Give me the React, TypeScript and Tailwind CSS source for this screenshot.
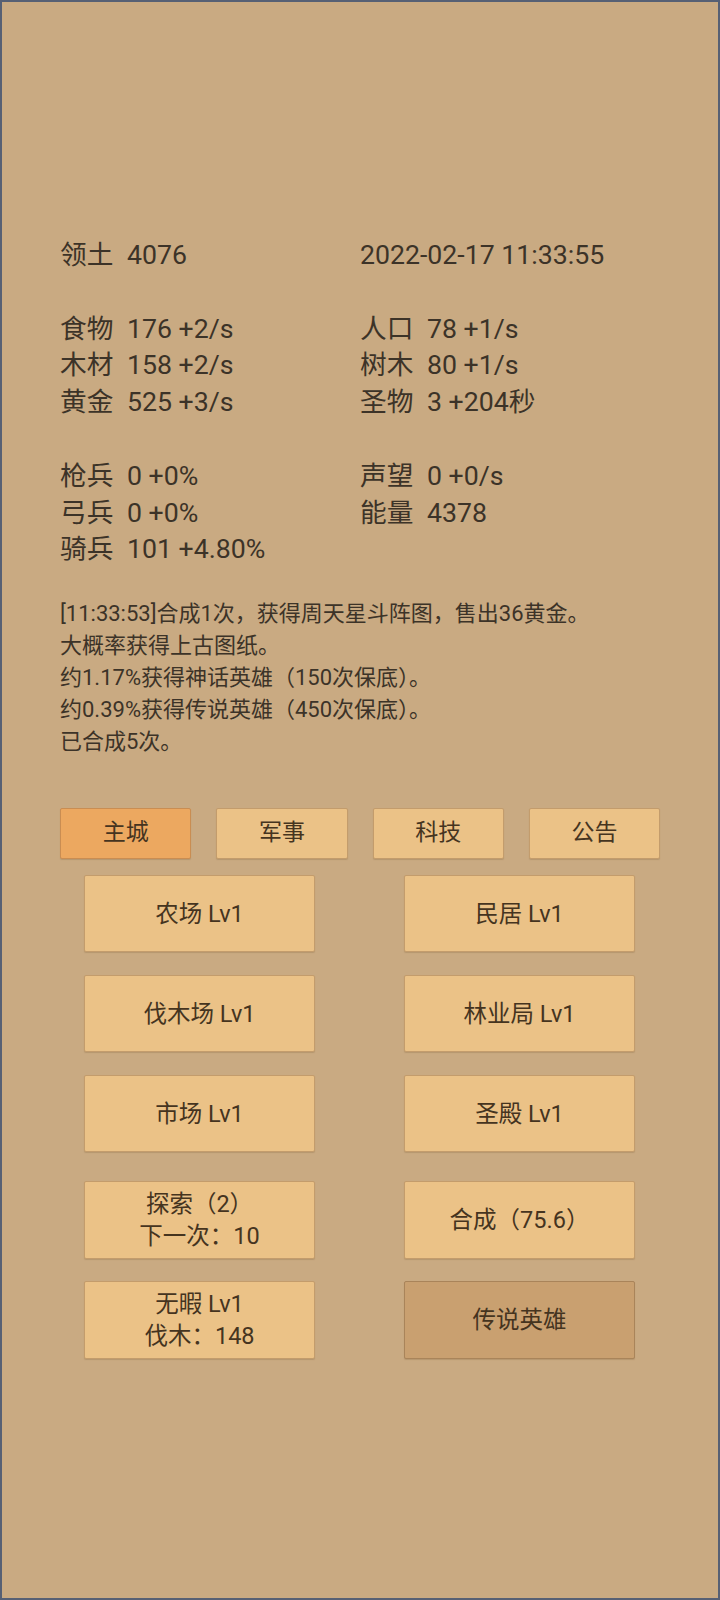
import React from "react";

const font = { fontFamily: '"Roboto", "Noto Sans CJK SC", sans-serif' };

function Stat({ label, value }: { label?: string; value?: string }) {
  if (!label && !value) return <div className="h-[36.8px]" />;
  return (
    <div className="flex h-[36.8px] items-center">
      {label ? <span className="w-[53px] mr-[14px] shrink-0 whitespace-nowrap">{label}</span> : null}
      <span className="whitespace-nowrap">{value}</span>
    </div>
  );
}

function Btn({ children, dark }: { children: React.ReactNode; dark?: boolean }) {
  return (
    <div
      className={
        "w-[231px] flex flex-col items-center justify-center rounded-[2px] border text-[23.5px] leading-[32px] text-[#45341f] shadow-[0_1px_1px_rgba(120,90,50,0.25)] " +
        (dark
          ? "bg-[#c9a070] border-[#a9845a]"
          : "bg-[#ebc287] border-[#c39c6c]")
      }
    >
      {children}
    </div>
  );
}

export default function App() {
  const tabs = ["主城", "军事", "科技", "公告"];
  return (
    <div
      style={font}
      className="w-[720px] h-[1600px] bg-[#c9aa82] border-2 border-[#566074] text-[#3c3328] box-border overflow-hidden"
    >
      <div className="pt-[235px] px-[58px]">
        <div className="text-[26.7px] leading-[36.8px] grid grid-cols-2">
          <div>
            <Stat label="领土" value="4076" />
            <Stat />
            <Stat label="食物" value="176 +2/s" />
            <Stat label="木材" value="158 +2/s" />
            <Stat label="黄金" value="525 +3/s" />
            <Stat />
            <Stat label="枪兵" value="0 +0%" />
            <Stat label="弓兵" value="0 +0%" />
            <Stat label="骑兵" value="101 +4.80%" />
          </div>
          <div>
            <Stat value="2022-02-17 11:33:55" />
            <Stat />
            <Stat label="人口" value="78 +1/s" />
            <Stat label="树木" value="80 +1/s" />
            <Stat label="圣物" value="3 +204秒" />
            <Stat />
            <Stat label="声望" value="0 +0/s" />
            <Stat label="能量" value="4378" />
          </div>
        </div>

        <div className="mt-[30px] text-[22px] leading-[32px]">
          <div>[11:33:53]合成1次，获得周天星斗阵图，售出36黄金。</div>
          <div>大概率获得上古图纸。</div>
          <div>约1.17%获得神话英雄（150次保底）。</div>
          <div>约0.39%获得传说英雄（450次保底）。</div>
          <div>已合成5次。</div>
        </div>

        <div className="mt-[50px] grid grid-cols-4 gap-[25px]">
          {tabs.map((t, i) => (
            <div
              key={t}
              className={
                "h-[51px] flex items-center justify-center rounded-[2px] border text-[23px] text-[#45341f] shadow-[0_1px_1px_rgba(120,90,50,0.25)] " +
                (i === 0
                  ? "bg-[#eca860] border-[#c98d52]"
                  : "bg-[#ebc287] border-[#c39c6c]")
              }
            >
              {t}
            </div>
          ))}
        </div>

        <div className="mt-[16px] ml-[24px] grid grid-cols-[231px_231px] gap-x-[89px] gap-y-[23px] auto-rows-[77px]">
          <Btn>农场 Lv1</Btn>
          <Btn>民居 Lv1</Btn>
          <Btn>伐木场 Lv1</Btn>
          <Btn>林业局 Lv1</Btn>
          <Btn>市场 Lv1</Btn>
          <Btn>圣殿 Lv1</Btn>
        </div>

        <div className="mt-[29px] ml-[24px] grid grid-cols-[231px_231px] gap-x-[89px] gap-y-[22px] auto-rows-[78px]">
          <Btn>
            <span>探索（2）</span>
            <span>下一次：10</span>
          </Btn>
          <Btn>合成（75.6）</Btn>
          <Btn>
            <span>无暇 Lv1</span>
            <span>伐木：148</span>
          </Btn>
          <Btn dark>传说英雄</Btn>
        </div>
      </div>
    </div>
  );
}
